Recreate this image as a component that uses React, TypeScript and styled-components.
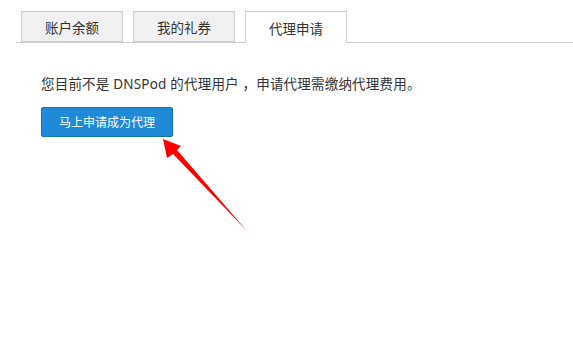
import styled, { createGlobalStyle } from 'styled-components';

const GlobalStyle = createGlobalStyle`
  html, body {
    margin: 0;
    padding: 0;
    background: #fff;
  }
  body {
    font-family: "Noto Sans", "Noto Sans CJK SC", sans-serif;
    color: #333;
  }
`;

const Page = styled.div`
  position: relative;
  width: 573px;
  height: 341px;
  padding: 11px 0 0 16px;
  box-sizing: border-box;
  overflow: hidden;
`;

const TabBar = styled.ul`
  display: flex;
  gap: 10px;
  margin: 0;
  padding: 0 0 0 5px;
  list-style: none;
  border-bottom: 1px solid #d0d0d0;
  height: 31px;
`;

const Tab = styled.li<{ $active?: boolean }>`
  width: 102px;
  height: ${(p) => (p.$active ? '32px' : '31px')};
  box-sizing: border-box;
  border: 1px solid #d0d0d0;
  border-bottom: ${(p) => (p.$active ? 'none' : '1px solid #d0d0d0')};
  background: ${(p) => (p.$active ? '#fff' : '#f0f0f0')};
  display: flex;
  align-items: center;
  justify-content: center;
  font-size: 13.5px;
  color: #333;
  cursor: pointer;
`;

const Body = styled.div`
  padding: 31px 0 0 25px;
`;

const Notice = styled.p`
  margin: 0;
  font-size: 13.5px;
  letter-spacing: 0.2px;
  line-height: 20px;
  color: #333;
  white-space: nowrap;
`;

const ApplyButton = styled.button`
  margin-top: 13px;
  width: 132px;
  height: 30px;
  border: 1px solid #1872bb;
  border-radius: 2px;
  background: #1e8ad8;
  color: #fff;
  font-family: inherit;
  font-size: 12px;
  cursor: pointer;
`;

const Arrow = styled.svg`
  position: absolute;
  left: 0;
  top: 0;
  pointer-events: none;
`;

export default function App() {
  return (
    <Page>
      <GlobalStyle />
      <TabBar>
        <Tab>账户余额</Tab>
        <Tab>我的礼券</Tab>
        <Tab $active>代理申请</Tab>
      </TabBar>
      <Body>
        <Notice>您目前不是 DNSPod 的代理用户 ，申请代理需缴纳代理费用。</Notice>
        <ApplyButton>马上申请成为代理</ApplyButton>
      </Body>
      <Arrow width="573" height="341" viewBox="0 0 573 341">
        <polygon points="163,139 181,146 177,150 247,231 173,154 167,158" fill="#ff0000" />
      </Arrow>
    </Page>
  );
}
